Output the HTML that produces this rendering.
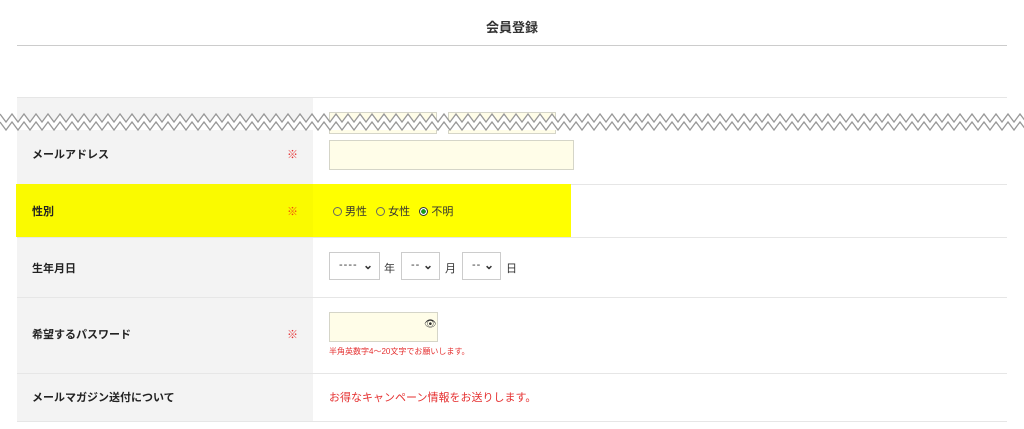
<!DOCTYPE html>
<html><head><meta charset="utf-8"><style>
body{margin:0;width:1024px;height:429px;background:#fff;position:relative;overflow:hidden;font-family:"Liberation Sans","Noto Sans CJK JP",sans-serif;}
.a{position:absolute}
.lab{position:absolute;left:32px;font-size:11px;font-weight:bold;color:#222}
.req{position:absolute;left:287px;font-size:11px;font-weight:bold;color:#e53030}
.hr{position:absolute;left:17px;width:990px;height:1px;background:#e6e6e6}
.inp{position:absolute;background:#fffde8;border:1px solid #d5d5c8}
.sel{position:absolute;top:252px;height:28px;border:1px solid #ccc;background:#fff;font-size:11px;color:#333;box-sizing:border-box}
.sel span{position:absolute;left:9px;top:6px;letter-spacing:1px}
.sel i{position:absolute;right:6px;top:5px;font-style:normal;font-weight:bold;font-size:12px}
.t{position:absolute;font-size:11px;color:#333}
.r{display:inline-block;width:7px;height:7px;border:1px solid #666;border-radius:50%;margin-right:3px;vertical-align:-1px}
</style></head><body>
<div class="a" style="left:0;top:17px;width:1024px;text-align:center;font-size:13px;font-weight:bold;color:#333">会員登録</div>
<div class="a" style="left:17px;top:45px;width:990px;height:1px;background:#ccc"></div>
<div class="a" style="left:17px;top:97px;width:296px;height:324px;background:#f3f3f3"></div>
<div class="hr" style="top:97px"></div>
<div class="inp" style="left:329px;top:112px;width:106px;height:20px"></div>
<div class="inp" style="left:448px;top:112px;width:106px;height:20px"></div>
<svg class="a" style="left:0;top:110px" width="1024" height="28">
<polygon fill="#fff" stroke="none" points="0,4 6,12 12,4 18,12 24,4 30,12 36,4 42,12 48,4 54,12 60,4 66,12 72,4 78,12 84,4 90,12 96,4 102,12 108,4 114,12 120,4 126,12 132,4 138,12 144,4 150,12 156,4 162,12 168,4 174,12 180,4 186,12 192,4 198,12 204,4 210,12 216,4 222,12 228,4 234,12 240,4 246,12 252,4 258,12 264,4 270,12 276,4 282,12 288,4 294,12 300,4 306,12 312,4 318,12 324,4 330,12 336,4 342,12 348,4 354,12 360,4 366,12 372,4 378,12 384,4 390,12 396,4 402,12 408,4 414,12 420,4 426,12 432,4 438,12 444,4 450,12 456,4 462,12 468,4 474,12 480,4 486,12 492,4 498,12 504,4 510,12 516,4 522,12 528,4 534,12 540,4 546,12 552,4 558,12 564,4 570,12 576,4 582,12 588,4 594,12 600,4 606,12 612,4 618,12 624,4 630,12 636,4 642,12 648,4 654,12 660,4 666,12 672,4 678,12 684,4 690,12 696,4 702,12 708,4 714,12 720,4 726,12 732,4 738,12 744,4 750,12 756,4 762,12 768,4 774,12 780,4 786,12 792,4 798,12 804,4 810,12 816,4 822,12 828,4 834,12 840,4 846,12 852,4 858,12 864,4 870,12 876,4 882,12 888,4 894,12 900,4 906,12 912,4 918,12 924,4 930,12 936,4 942,12 948,4 954,12 960,4 966,12 972,4 978,12 984,4 990,12 996,4 1002,12 1008,4 1014,12 1020,4 1026,12 1026,20 0,20"/>
<polyline fill="none" stroke="#999" stroke-width="1.3" points="0,4 6,12 12,4 18,12 24,4 30,12 36,4 42,12 48,4 54,12 60,4 66,12 72,4 78,12 84,4 90,12 96,4 102,12 108,4 114,12 120,4 126,12 132,4 138,12 144,4 150,12 156,4 162,12 168,4 174,12 180,4 186,12 192,4 198,12 204,4 210,12 216,4 222,12 228,4 234,12 240,4 246,12 252,4 258,12 264,4 270,12 276,4 282,12 288,4 294,12 300,4 306,12 312,4 318,12 324,4 330,12 336,4 342,12 348,4 354,12 360,4 366,12 372,4 378,12 384,4 390,12 396,4 402,12 408,4 414,12 420,4 426,12 432,4 438,12 444,4 450,12 456,4 462,12 468,4 474,12 480,4 486,12 492,4 498,12 504,4 510,12 516,4 522,12 528,4 534,12 540,4 546,12 552,4 558,12 564,4 570,12 576,4 582,12 588,4 594,12 600,4 606,12 612,4 618,12 624,4 630,12 636,4 642,12 648,4 654,12 660,4 666,12 672,4 678,12 684,4 690,12 696,4 702,12 708,4 714,12 720,4 726,12 732,4 738,12 744,4 750,12 756,4 762,12 768,4 774,12 780,4 786,12 792,4 798,12 804,4 810,12 816,4 822,12 828,4 834,12 840,4 846,12 852,4 858,12 864,4 870,12 876,4 882,12 888,4 894,12 900,4 906,12 912,4 918,12 924,4 930,12 936,4 942,12 948,4 954,12 960,4 966,12 972,4 978,12 984,4 990,12 996,4 1002,12 1008,4 1014,12 1020,4 1026,12"/>
<polygon fill="#f3f3f3" points="17,20 313,20 313,28 17,28"/>
<polyline fill="none" stroke="#999" stroke-width="1.3" transform="translate(0,8)" points="0,4 6,12 12,4 18,12 24,4 30,12 36,4 42,12 48,4 54,12 60,4 66,12 72,4 78,12 84,4 90,12 96,4 102,12 108,4 114,12 120,4 126,12 132,4 138,12 144,4 150,12 156,4 162,12 168,4 174,12 180,4 186,12 192,4 198,12 204,4 210,12 216,4 222,12 228,4 234,12 240,4 246,12 252,4 258,12 264,4 270,12 276,4 282,12 288,4 294,12 300,4 306,12 312,4 318,12 324,4 330,12 336,4 342,12 348,4 354,12 360,4 366,12 372,4 378,12 384,4 390,12 396,4 402,12 408,4 414,12 420,4 426,12 432,4 438,12 444,4 450,12 456,4 462,12 468,4 474,12 480,4 486,12 492,4 498,12 504,4 510,12 516,4 522,12 528,4 534,12 540,4 546,12 552,4 558,12 564,4 570,12 576,4 582,12 588,4 594,12 600,4 606,12 612,4 618,12 624,4 630,12 636,4 642,12 648,4 654,12 660,4 666,12 672,4 678,12 684,4 690,12 696,4 702,12 708,4 714,12 720,4 726,12 732,4 738,12 744,4 750,12 756,4 762,12 768,4 774,12 780,4 786,12 792,4 798,12 804,4 810,12 816,4 822,12 828,4 834,12 840,4 846,12 852,4 858,12 864,4 870,12 876,4 882,12 888,4 894,12 900,4 906,12 912,4 918,12 924,4 930,12 936,4 942,12 948,4 954,12 960,4 966,12 972,4 978,12 984,4 990,12 996,4 1002,12 1008,4 1014,12 1020,4 1026,12"/>
</svg>
<div class="lab" style="top:146px">メールアドレス</div><div class="req" style="top:146px">※</div>
<div class="inp" style="left:329px;top:140px;width:243px;height:28px"></div>
<div class="a" style="left:16px;top:184px;width:555px;height:53px;background:#fafa00"></div>
<div class="a" style="left:313px;top:184px;width:258px;height:53px;background:#ffff00"></div>
<div class="hr" style="top:184px;left:571px;width:436px"></div>
<div class="lab" style="top:203px">性別</div><div class="req" style="top:203px;color:#f04a10">※</div>
<div class="t" style="left:333px;top:203px"><span class="r"></span>男性&nbsp;&nbsp;&nbsp;<span class="r"></span>女性&nbsp;&nbsp;&nbsp;<span class="r" style="border-color:#333;background:radial-gradient(circle,#1a9a1a 45%,#fff 50%)"></span>不明</div>
<div class="hr" style="top:237px"></div>
<div class="lab" style="top:260px">生年月日</div>
<div class="sel" style="left:329px;width:51px"><span>----</span><i>⌄</i></div><div class="t" style="left:384px;top:260px">年</div>
<div class="sel" style="left:401px;width:39px"><span>--</span><i>⌄</i></div><div class="t" style="left:445px;top:260px">月</div>
<div class="sel" style="left:462px;width:39px"><span>--</span><i>⌄</i></div><div class="t" style="left:506px;top:260px">日</div>
<div class="hr" style="top:297px"></div>
<div class="lab" style="top:326px">希望するパスワード</div><div class="req" style="top:326px">※</div>
<div class="inp" style="left:329px;top:312px;width:107px;height:28px"></div>
<div class="t" style="left:424px;top:319px;font-size:10px">👁</div>
<div class="t" style="left:329px;top:346px;font-size:8px;color:#e53030">半角英数字4〜20文字でお願いします。</div>
<div class="hr" style="top:373px"></div>
<div class="lab" style="top:389px">メールマガジン送付について</div>
<div class="t" style="left:329px;top:389px;color:#e53030">お得なキャンペーン情報をお送りします。</div>
<div class="hr" style="top:421px"></div>
</body></html>
